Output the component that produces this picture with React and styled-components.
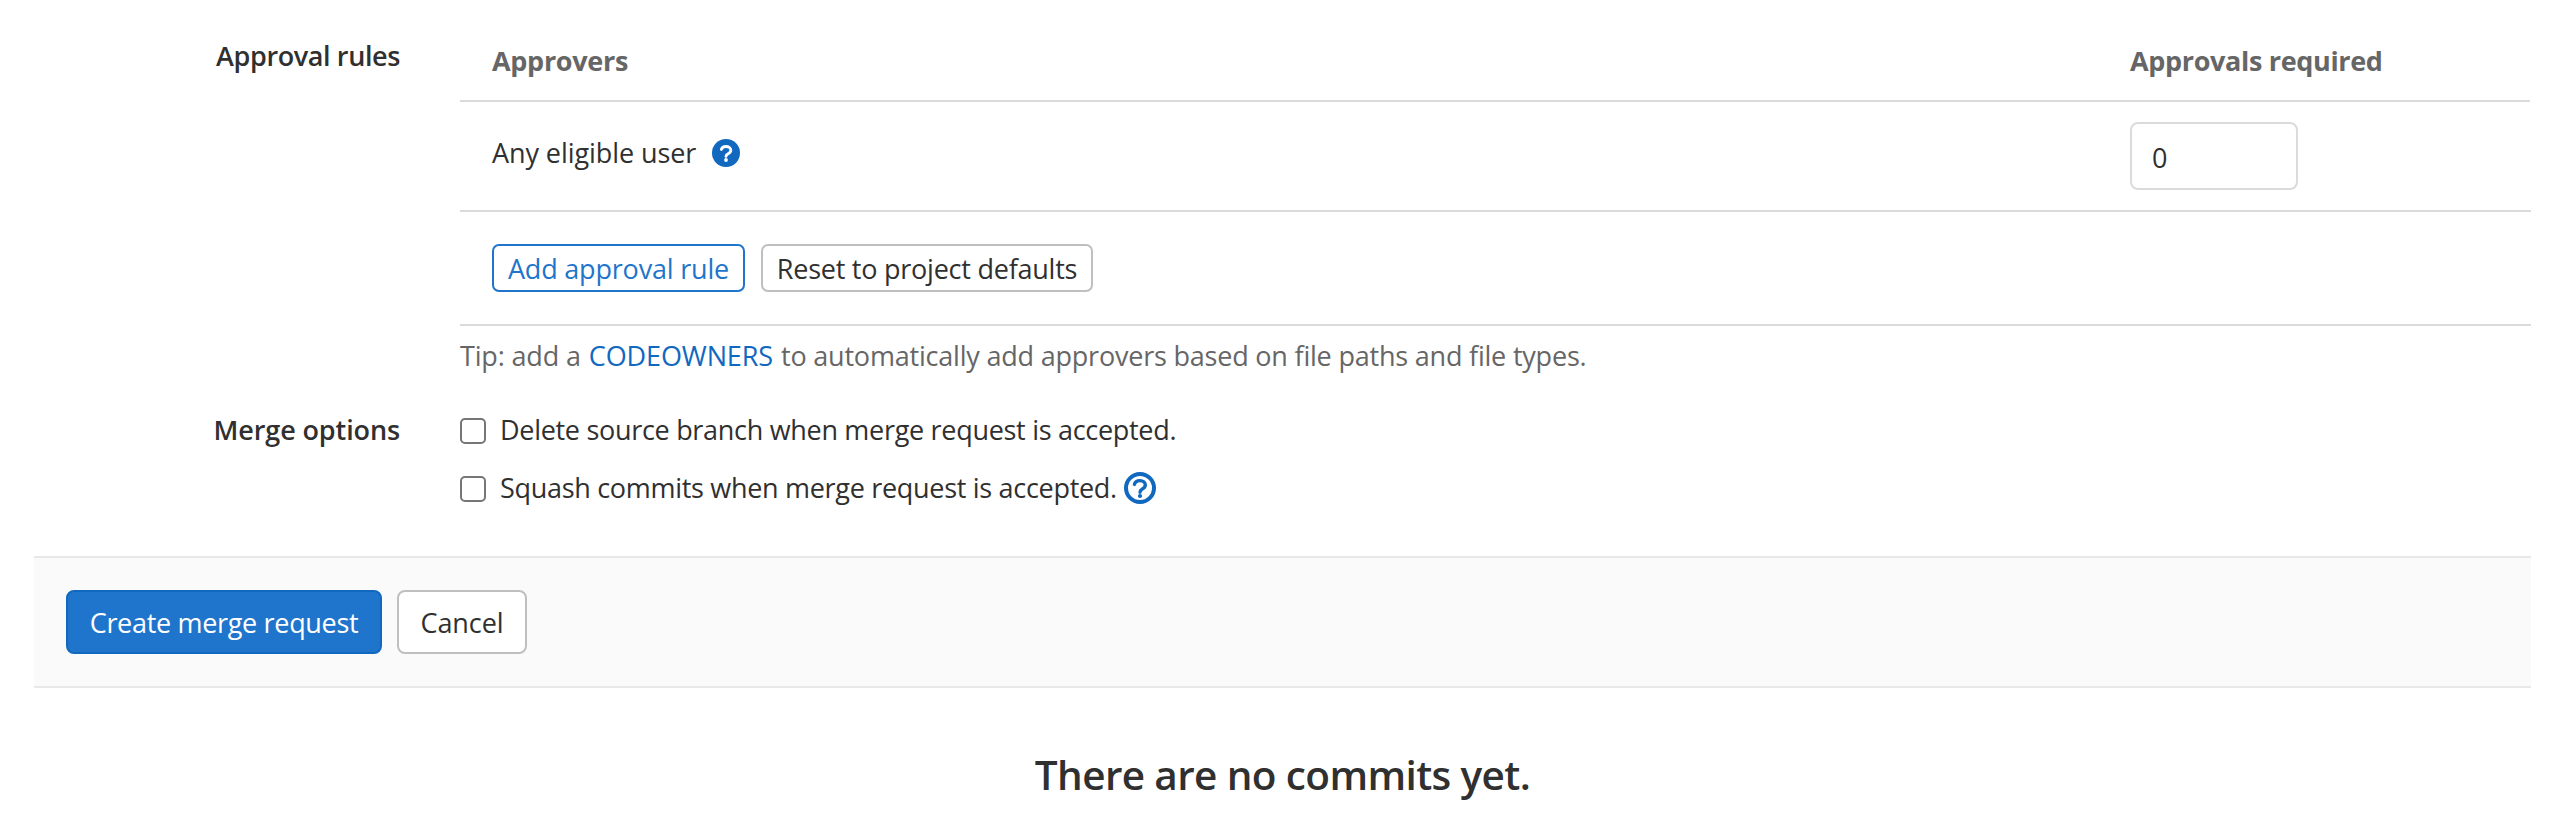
import React from "react";
import styled, { createGlobalStyle } from "styled-components";

const GlobalStyle = createGlobalStyle`
  * { box-sizing: border-box; }
  body {
    margin: 0;
    background: #fff;
    color: #303030;
    font-family: "Open Sans", "Noto Sans", sans-serif;
    font-size: 27px;
    line-height: 37px;
  }
`;

const Page = styled.main`
  width: 2554px;
  height: 824px;
  padding: 0 23px 0 34px;
  overflow: hidden;
`;

const Field = styled.section`
  display: grid;
  grid-template-columns: 366px 2071px;
  column-gap: 60px;
`;

const FieldLabel = styled.div`
  padding-top: ${(p) => p.$top}px;
  text-align: right;
  font-weight: 600;
  letter-spacing: ${(p) => p.$track}px;
`;

const Text = styled.span`
  white-space: nowrap;
  letter-spacing: ${(p) => p.$track}px;
`;

const Row = styled.div`
  display: grid;
  grid-template-columns: 1638px 1fr;
  align-items: start;
  padding-left: 32px;
  border-bottom: 2px solid #dbdbdb;
`;

const HeaderRow = styled(Row)`
  height: 102px;
  margin-right: 1px;
  padding-top: 42px;
  color: #666;
  font-weight: 700;
`;

const RuleRow = styled(Row)`
  height: 110px;
`;

const RuleName = styled.div`
  display: flex;
  align-items: center;
  gap: 16px;
  padding-top: 32px;
`;

const CountInput = styled.input`
  width: 168px;
  height: 68px;
  margin-top: 20px;
  padding: 3px 20px 0;
  border: 2px solid #dbdbdb;
  border-radius: 8px;
  background: #fff;
  color: #303030;
  font: inherit;
  outline: none;
`;

const ActionRow = styled.div`
  display: flex;
  align-items: center;
  gap: 16px;
  height: 114px;
  padding-left: 32px;
  border-bottom: 2px solid #dbdbdb;
`;

const Button = styled.button`
  display: flex;
  align-items: center;
  justify-content: center;
  width: ${(p) => p.$width}px;
  height: 64px;
  padding: 0;
  border: 2px solid #bfbfbf;
  border-radius: 8px;
  background: #fff;
  color: #303030;
  font: inherit;
`;

const SmallButton = styled(Button)`
  height: 48px;
  border-radius: 7px;
`;

const OutlineButton = styled(SmallButton)`
  border-color: #1f75cb;
  color: #1f75cb;
`;

const PrimaryButton = styled(Button)`
  border-color: #1068bf;
  background: #1f75cb;
  color: #fff;
`;

const Tip = styled.p`
  display: flex;
  margin: 11px 0 0;
  color: #666;
`;

const Link = styled.a`
  margin: 0 8px 0 8px;
  color: #1068bf;
  letter-spacing: -0.11px;
  text-decoration: none;
`;

const Options = styled.div`
  display: flex;
  flex-direction: column;
  gap: 21px;
  padding-top: 37px;
`;

const Option = styled.label`
  display: flex;
  align-items: center;
  height: 37px;
`;

const Checkbox = styled.input`
  appearance: none;
  width: 26px;
  height: 26px;
  margin: 3px 14px 0 0;
  border: 2px solid #767676;
  border-radius: 5px;
  background: #fff;
`;

const Icon = styled.svg`
  display: block;
  flex: none;
  width: ${(p) => p.$size}px;
  height: ${(p) => p.$size}px;
  color: #1068bf;
`;

const OptionIcon = styled(Icon)`
  margin-left: 7px;
`;

const Footer = styled.footer`
  display: flex;
  align-items: center;
  gap: 15px;
  height: 132px;
  margin-top: 50px;
  padding-left: 32px;
  border-top: 2px solid #e8e8e8;
  border-bottom: 2px solid #e8e8e8;
  background: #fafafa;
`;

const EmptyTitle = styled.h4`
  margin: 59px 0 0;
  text-align: center;
  font-size: 40.5px;
  font-weight: 600;
  line-height: 55px;
  letter-spacing: -0.62px;
`;

export default function App() {
  return (
    <Page>
      <GlobalStyle />
      <Field>
        <FieldLabel $top={37} $track={-0.38}>Approval rules</FieldLabel>
        <div>
          <HeaderRow>
            <Text $track={-0.3}>Approvers</Text>
            <Text $track={-0.34}>Approvals required</Text>
          </HeaderRow>
          <RuleRow>
            <RuleName>
              <Text $track={-0.08}>Any eligible user</Text>
              <Icon $size={28} viewBox="0 0 28 28" fill="none">
                <circle cx="14" cy="14" r="14" fill="currentColor" />
                <path
                  d="M9.4 10.4C9.9 8.5 11.7 7.5 14 7.5c2.8 0 4.8 1.5 4.8 3.8 0 2-1.4 2.9-3 3.7-1.2.6-1.8 1.1-1.8 2.4"
                  stroke="#fff"
                  strokeWidth="2.9"
                  strokeLinecap="round"
                />
                <circle cx="14" cy="21" r="1.9" fill="#fff" />
              </Icon>
            </RuleName>
            <CountInput type="text" defaultValue="0" aria-label="Approvals required" />
          </RuleRow>
          <ActionRow>
            <OutlineButton $width={253}><Text $track={-0.19}>Add approval rule</Text></OutlineButton>
            <SmallButton $width={332}><Text $track={-0.24}>Reset to project defaults</Text></SmallButton>
          </ActionRow>
          <Tip>
            <Text $track={-0.16}>Tip: add a</Text>
            <Link>CODEOWNERS</Link>
            <Text $track={-0.205}>
              to automatically add approvers based on file paths and file types.
            </Text>
          </Tip>
        </div>
      </Field>
      <Field>
        <FieldLabel $top={37} $track={-0.11}>Merge options</FieldLabel>
        <Options>
          <Option>
            <Checkbox type="checkbox" />
            <Text $track={-0.3}>Delete source branch when merge request is accepted.</Text>
          </Option>
          <Option>
            <Checkbox type="checkbox" />
            <Text $track={-0.3}>Squash commits when merge request is accepted.</Text>
            <OptionIcon $size={32} viewBox="0 0 32 32" fill="none">
              <circle cx="16" cy="16" r="14" stroke="currentColor" strokeWidth="4" />
              <path
                d="M10.4 12.4c.6-2.4 2.7-3.8 5.5-3.8 3.2 0 5.4 1.8 5.4 4.4 0 2.3-1.5 3.3-3.3 4.3-1.4.8-2 1.4-2 3"
                stroke="currentColor"
                strokeWidth="3.4"
                strokeLinecap="round"
              />
              <circle cx="16" cy="24" r="2.1" fill="currentColor" />
            </OptionIcon>
          </Option>
        </Options>
      </Field>
      <Footer>
        <PrimaryButton $width={316}><Text $track={-0.32}>Create merge request</Text></PrimaryButton>
        <Button $width={130}><Text $track={-0.1}>Cancel</Text></Button>
      </Footer>
      <EmptyTitle>There are no commits yet.</EmptyTitle>
    </Page>
  );
}
